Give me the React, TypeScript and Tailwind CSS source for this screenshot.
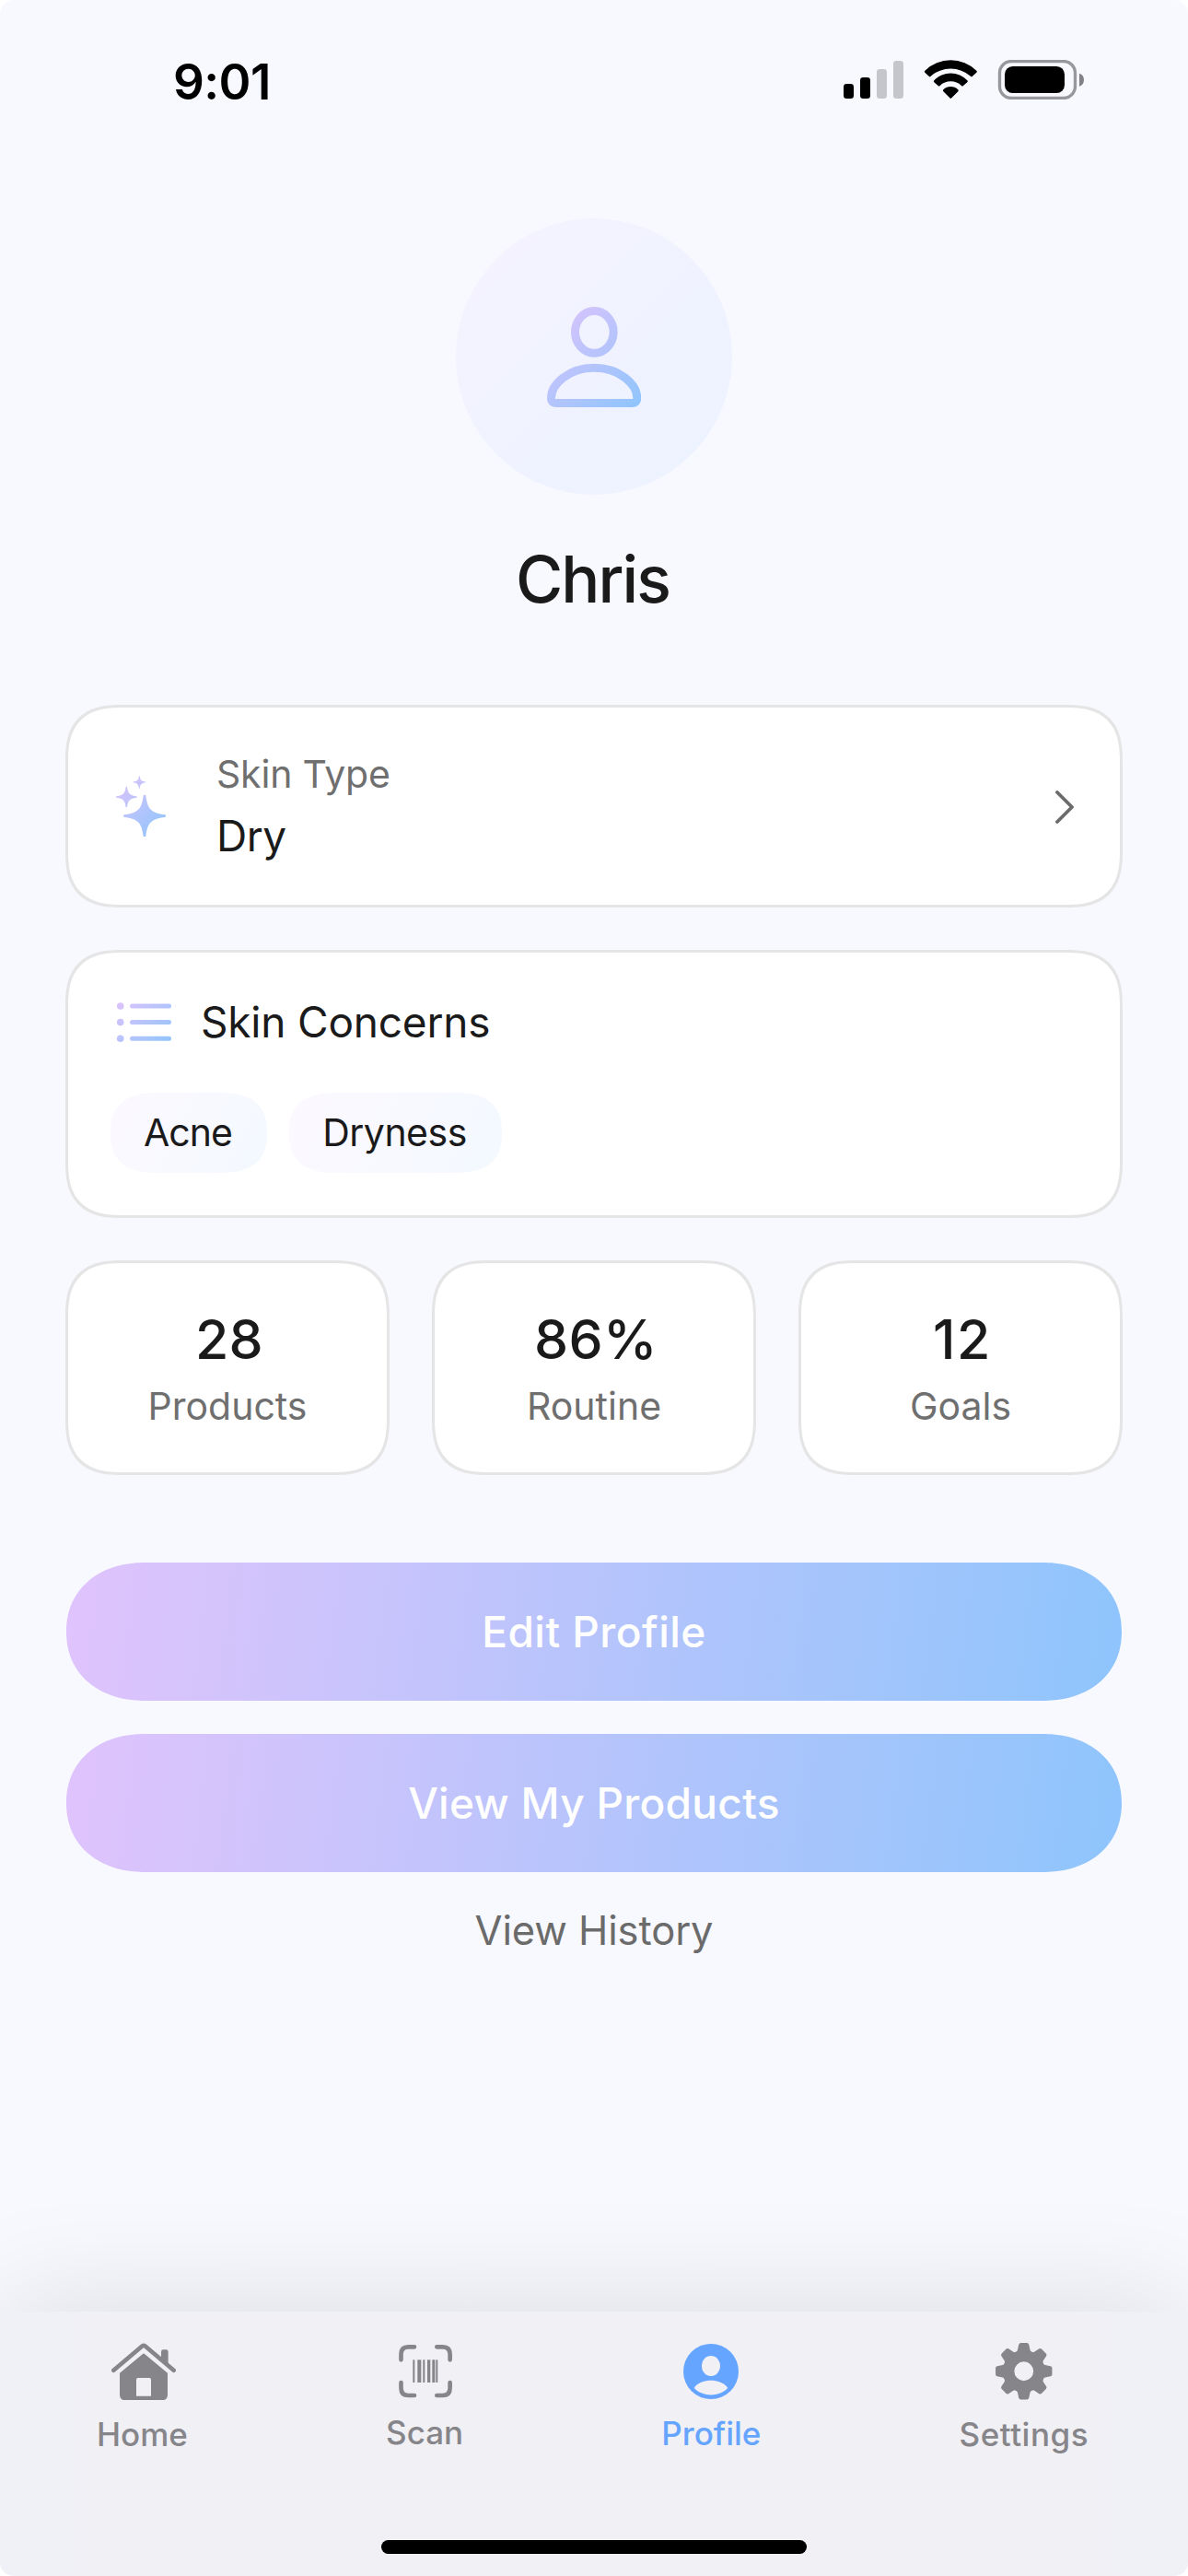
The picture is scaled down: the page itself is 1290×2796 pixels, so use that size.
import type { ReactNode } from "react";

const card =
  "border-[3px] border-[#e5e5e5] bg-white rounded-[48px] supports-[corner-shape:squircle]:rounded-[62px] supports-[corner-shape:squircle]:[corner-shape:superellipse(1.4)]";

const pill =
  "flex h-[150px] items-center justify-center text-[46px] font-[470] text-white bg-[linear-gradient(97.5deg,#e0c3fc,#8ec5fc)] rounded-[75px] supports-[corner-shape:squircle]:rounded-[86px/75px] supports-[corner-shape:squircle]:[corner-shape:superellipse(1.12)]";

const chip =
  "flex h-[87px] items-center justify-center text-[41px] rounded-[36px] supports-[corner-shape:squircle]:rounded-[52px/43px] supports-[corner-shape:squircle]:[corner-shape:superellipse(1.35)]";

function StatusIcons() {
  return (
    <svg className="mt-[-3px] h-[43px] w-[261.3px]" viewBox="168 105 784 129">
      <rect x="168" y="183" width="33" height="48" rx="10" fill="#000" />
      <rect x="222" y="162" width="33" height="69" rx="10" fill="#000" />
      <rect x="276" y="135" width="33" height="96" rx="10" fill="#c5c6cb" />
      <rect x="330" y="108" width="33" height="123" rx="10" fill="#c5c6cb" />
      <path d="M433 146Q430 143 433 140A121 121 0 0 1 601 140Q604 143 601 146L588 158Q585 161 582 158A99 99 0 0 0 452 158Q449 161 446 158Z" />
      <path d="M463 178Q460 175 463 172A73 73 0 0 1 571 172Q574 175 571 178L558 189Q555 192 552 189A51 51 0 0 0 482 189Q479 192 476 189Z" />
      <path d="M493 208Q490 205 493 202A34 34 0 0 1 541 202Q544 205 541 208L520 229Q517 232 514 229Z" />
      <rect x="676.5" y="109.5" width="246" height="120" rx="38" fill="none" stroke="#97979c" strokeWidth="10" />
      <rect x="693" y="126" width="195" height="87" rx="26" fill="#000" />
      <path d="M936 149Q951 154 951 170Q951 186 936 191Z" fill="#828286" />
    </svg>
  );
}

function AvatarIcon() {
  return (
    <svg className="h-[109px] w-[102.3px]" viewBox="372 339 307 327" fill="none" stroke="url(#avatar)" strokeWidth="27">
      <defs>
        <linearGradient id="avatar" gradientUnits="userSpaceOnUse" x1="372" y1="339" x2="679" y2="666">
          <stop stopColor="#e0c3fc" />
          <stop offset="1" stopColor="#8ec5fc" />
        </linearGradient>
      </defs>
      <ellipse cx="526" cy="421" rx="62.5" ry="68.5" />
      <path d="M385.5 636C385.5 592 442 538 525.5 538C609 538 665.5 592 665.5 636Q665.5 652.5 648 652.5H403Q385.5 652.5 385.5 636Z" />
    </svg>
  );
}

function SparklesIcon() {
  return (
    <svg className="h-[66.7px] w-[54px]" viewBox="198 277 162 200" fill="url(#sparkle)">
      <defs>
        <linearGradient id="sparkle" gradientUnits="userSpaceOnUse" x1="188" y1="287" x2="360" y2="467">
          <stop stopColor="#e0c3fc" />
          <stop offset="1" stopColor="#8ec5fc" />
        </linearGradient>
      </defs>
      <path d="M287 341Q291 337 295 341C300 386 313 399 358 404Q362 408 358 412C313 417 300 430 295 475Q291 479 287 475C282 430 269 417 224 412Q220 408 224 404C269 399 282 386 287 341Z" />
      <path d="M230 313Q232 311 234 313C237 335 243 341 265 344Q267 346 265 348C243 351 237 357 234 379Q232 381 230 379C227 357 221 351 199 348Q197 346 199 344C221 341 227 335 230 313Z" />
      <path d="M273 278Q274 276 275 278C277 292 281 295 295 297Q297 298 295 299C281 301 277 305 275 319Q274 321 273 319C271 305 267 301 253 299Q251 298 253 297C267 295 271 292 273 278Z" />
    </svg>
  );
}

function ListIcon() {
  return (
    <svg className="h-[45px] w-[60px]" viewBox="0 0 60 45" fill="url(#list)">
      <defs>
        <linearGradient id="list" gradientUnits="userSpaceOnUse" x1="4" y1="-6" x2="56" y2="50">
          <stop stopColor="#e0c3fc" />
          <stop offset="1" stopColor="#8ec5fc" />
        </linearGradient>
      </defs>
      {[5, 22.6, 40.2].map((y) => (
        <g key={y}>
          <circle cx="4.7" cy={y} r="3.8" />
          <rect x="15" y={y - 2.5} width="45" height="5" rx="2.5" />
        </g>
      ))}
    </svg>
  );
}

function Chevron() {
  return (
    <svg className="mt-[2px] h-[36px] w-[20px]" viewBox="0 0 20 36" fill="none" stroke="#6b6b6b" strokeWidth="3.8" strokeLinecap="round" strokeLinejoin="round">
      <path d="M2 2L18 18L2 34" />
    </svg>
  );
}

function HomeIcon() {
  return (
    <svg className="ml-[3px] h-[62.3px] w-[70px]" viewBox="186 158 210 187" fill="#86858a">
      <path d="M193 247.500L286 168.500Q291 164.500 296 168.500L389 247.500" fill="none" stroke="#86858a" strokeWidth="14" strokeLinecap="round" />
      <path d="M348 210V187Q348 180 355 180H364Q371 180 371 187V228Z" />
      <path
        fillRule="evenodd"
        d="M213 256L288 194Q291 191 294 194L369 256V326Q369 345 350 345H232Q213 345 213 326ZM272 272Q267 272 267 277V331H315V277Q315 272 310 272Z"
      />
    </svg>
  );
}

function ScanIcon() {
  return (
    <svg className="ml-[3px] h-[57.3px] w-[58.3px]" viewBox="1121 167 175 172" fill="#86858a">
      <g fill="none" stroke="#86858a" strokeWidth="14" strokeLinecap="round">
        <path d="M1128.500 216V198Q1128.500 174 1152 174H1172" />
        <path d="M1245 174H1264Q1288 174 1288 198V216" />
        <path d="M1288 290V308Q1288 332 1264 332H1245" />
        <path d="M1172 332H1152Q1128.500 332 1128.500 308V290" />
      </g>
      <rect x="1167" y="216" width="6" height="74" />
      <rect x="1182" y="216" width="12" height="74" />
      <rect x="1200" y="216" width="6" height="74" />
      <rect x="1214" y="216" width="10" height="74" />
      <rect x="1230" y="216" width="9" height="74" />
      <rect x="1242" y="216" width="6" height="74" />
    </svg>
  );
}

function ProfileIcon() {
  return (
    <svg className="h-[60px] w-[60px]" viewBox="0 0 60 60">
      <circle cx="30" cy="30" r="30" fill="#66a5ff" />
      <ellipse cx="30" cy="24" rx="10.1" ry="11.1" fill="#f0f0f5" />
      <path d="M12.600 46.500Q11.600 47.800 12.700 49C22 57.600 38 57.600 47.300 49Q48.400 47.800 47.400 46.500C39 37.400 21 37.400 12.600 46.500Z" fill="#f0f0f5" />
    </svg>
  );
}

function GearIcon() {
  return (
    <svg className="h-[61.500px] w-[61.500px]" viewBox="-30.75 -30.75 61.5 61.5" fill="#86858a">
      <circle r="16.600" fill="none" stroke="#86858a" strokeWidth="12.400" />
      {[0, 45, 90, 135, 180, 225, 270, 315].map((a) => (
        <path
          key={a}
          transform={`rotate(${a})`}
          d="M-9 -20.500Q-7.200 -21.500 -6.800 -23L-5.500 -29Q-5 -30.700 -3.300 -30.700H3.300Q5 -30.700 5.500 -29L6.800 -23Q7.200 -21.500 9 -20.500Z"
        />
      ))}
    </svg>
  );
}

function Stat({ value, label, spacing }: { value: string; label: string; spacing: string }) {
  return (
    <div className={`flex h-[233px] flex-1 flex-col items-center pt-[46px] ${card}`}>
      <span className={`pl-[4px] text-[59px] leading-[73px] font-medium ${spacing}`}>{value}</span>
      <span className="text-[41px] leading-[73px] text-[#6f6f6f]">{label}</span>
    </div>
  );
}

function Tab({ icon, label, className }: { icon: ReactNode; label: string; className: string }) {
  return (
    <div className={`flex flex-col items-center text-[35px] leading-[40px] font-medium ${className}`}>
      <div className="flex h-[62px] items-center">{icon}</div>
      <span>{label}</span>
    </div>
  );
}

export default function App() {
  return (
    <div className="h-[2796px] w-[1290px] bg-white">
      <div className="flex h-full flex-col overflow-hidden rounded-[15px] bg-[#f8f9ff] font-['Inter','Liberation_Sans',sans-serif] text-[#1a1a1a]">
        <header className="flex h-[176px] items-center justify-between pr-[112.7px] pl-[188px]">
          <span className="pt-[2px] text-[53px] leading-[60px] font-semibold tracking-[-0.6px] text-black">9:01</span>
          <StatusIcons />
        </header>

        <main className="flex flex-1 flex-col px-[71px] pt-[61px]">
          <div className="flex size-[300px] items-center justify-center self-center rounded-full bg-[linear-gradient(135deg,#e0c3fc1f,#8ec5fc1f)]">
            <AvatarIcon />
          </div>
          <h1 className="mt-[52px] pr-[3px] text-center text-[70px] leading-[80px] font-medium tracking-[-1.9px]">Chris</h1>

          <section className={`mt-[96px] flex h-[220px] items-center pr-[50px] pl-[52px] ${card}`}>
            <SparklesIcon />
            <div className="ml-[55px] flex flex-1 flex-col pb-[2px] leading-[67px]">
              <span className="text-[41px] tracking-[-0.2px] text-[#6f6f6f]">Skin Type</span>
              <span className="text-[46px] tracking-[-0.5px]">Dry</span>
            </div>
            <Chevron />
          </section>

          <section className={`mt-[46px] flex h-[291px] flex-col pt-[45px] pl-[46px] ${card}`}>
            <div className="flex h-[60px] items-center gap-[32px] pl-[6px]">
              <ListIcon />
              <h2 className="text-[46px] tracking-[-0.2px]">Skin Concerns</h2>
            </div>
            <div className="mt-[47px] flex gap-[24px]">
              <span className={`w-[170px] bg-[linear-gradient(117deg,#e0c3fc1a,#8ec5fc1a)] pr-[2px] tracking-[-1px] ${chip}`}>Acne</span>
              <span className={`w-[231px] bg-[linear-gradient(110.6deg,#e0c3fc1a,#8ec5fc1a)] pr-[2px] tracking-[-0.5px] ${chip}`}>Dryness</span>
            </div>
          </section>

          <section className="mt-[46px] flex gap-[46px]">
            <Stat value="28" label="Products" spacing="tracking-[0.3px]" />
            <Stat value="86%" label="Routine" spacing="tracking-[0.3px]" />
            <Stat value="12" label="Goals" spacing="tracking-[1.5px]" />
          </section>

          <div className="mt-[95px] flex flex-col gap-[36px] px-px">
            <button className={`tracking-[0.5px] ${pill}`}>Edit Profile</button>
            <button className={`tracking-[0.3px] ${pill}`}>View My Products</button>
          </div>
          <button className="mt-[33px] self-center text-[43.5px] leading-[60px] tracking-[-0.1px] text-[#6b6b6b]">View History</button>
        </main>

        <nav className="flex h-[287px] flex-col bg-[linear-gradient(90deg,#eff1f6,#f0f0f5_8%,#f0f0f5_92%,#eff1f6)] pt-[34px] shadow-[0_-15px_120px_rgba(0,0,0,0.1)]">
          <div className="flex items-start justify-between pr-[108px] pl-[105px] text-[#86858a]">
            <Tab icon={<HomeIcon />} label="Home" className="gap-[17px]" />
            <Tab icon={<ScanIcon />} label="Scan" className="gap-[15px]" />
            <Tab icon={<ProfileIcon />} label="Profile" className="gap-[16px] text-[#66a5ff]" />
            <Tab icon={<GearIcon />} label="Settings" className="gap-[17px] tracking-[0.5px]" />
          </div>
          <div className="mt-auto mb-[24px] h-[15px] w-[462px] self-center rounded-full bg-black" />
        </nav>
      </div>
    </div>
  );
}
